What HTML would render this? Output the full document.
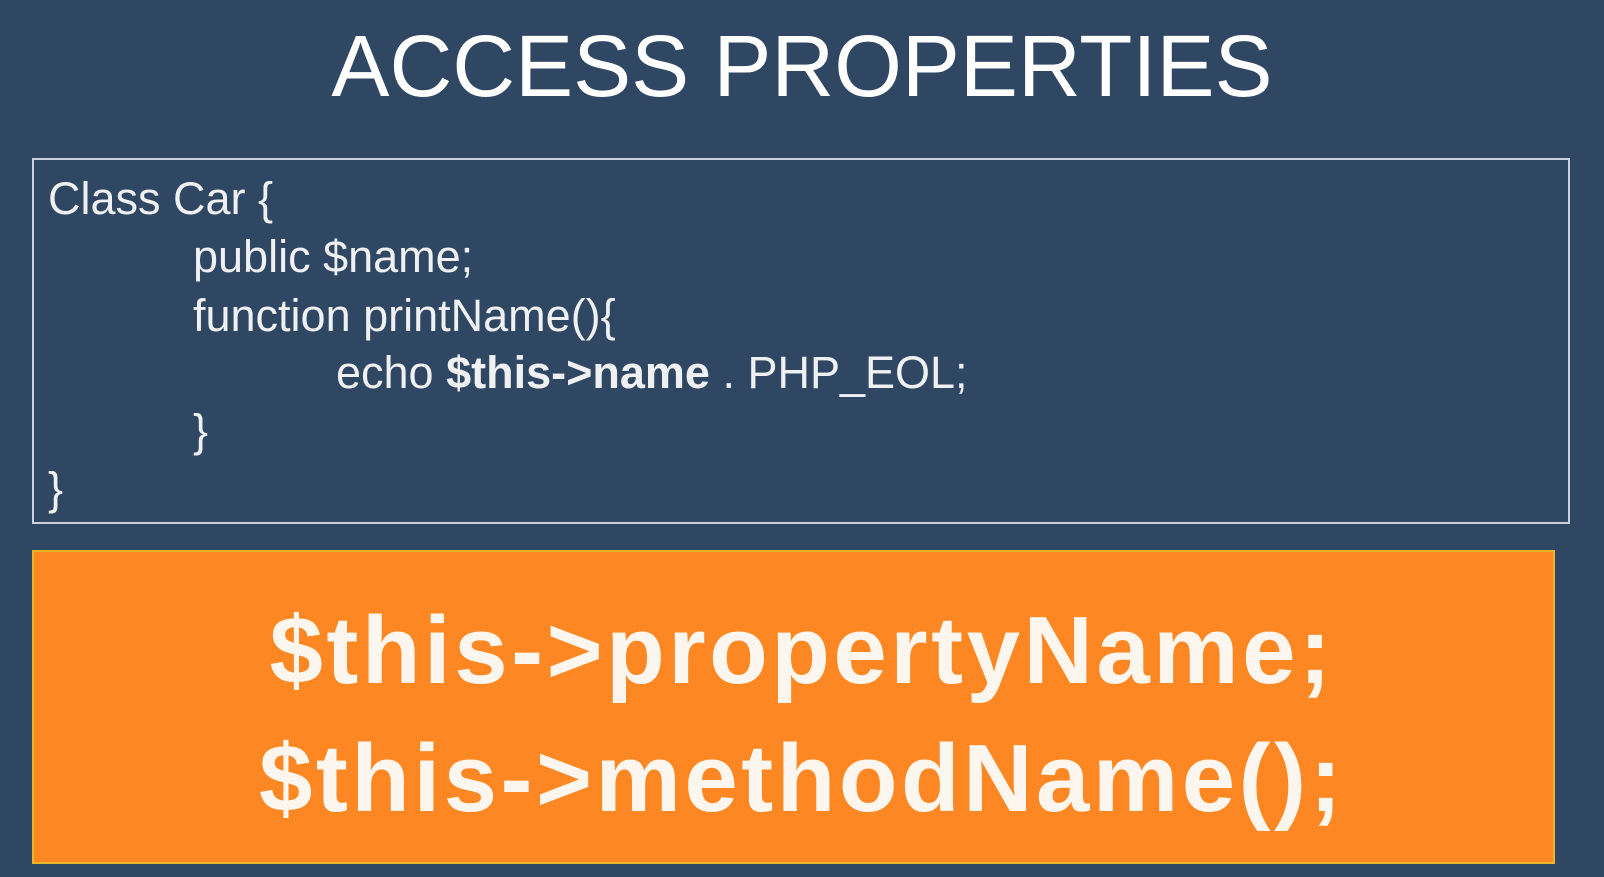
<!DOCTYPE html>
<html><head><meta charset="utf-8"><style>
html,body{margin:0;padding:0}
body{width:1604px;height:877px;background:#2f4762;position:relative;overflow:hidden;font-family:"Liberation Sans",sans-serif;color:#fff}
.t{position:absolute;white-space:nowrap;line-height:1}
#title{left:0;width:1604px;top:23px;text-align:center;font-size:87px}
#title span{display:inline-block;transform:scaleX(1.0);transform-origin:center}
#box{position:absolute;left:32px;top:158px;width:1534px;height:362px;border:2px solid #c9d2dc}
.c{font-size:45px;color:#eef0f2}
#or{position:absolute;left:32px;top:550px;width:1523px;height:314px;background:#fd8722;border:2px solid #e9b52a;box-sizing:border-box}
.o{font-size:96px;font-weight:bold;left:0;width:1604px;text-align:center;color:#fdf6ee;letter-spacing:3.5px}
</style></head><body>
<div class="t" id="title"><span>ACCESS PROPERTIES</span></div>
<div id="box"></div>
<div class="t c" style="left:48px;top:176px">Class Car {</div>
<div class="t c" style="left:193px;top:234px">public $name;</div>
<div class="t c" style="left:193px;top:293px">function printName(){</div>
<div class="t c" style="left:336px;top:350px">echo <b>$this-&gt;name</b> . PHP_EOL;</div>
<div class="t c" style="left:193px;top:408px">}</div>
<div class="t c" style="left:48px;top:466px">}</div>
<div id="or"></div>
<div class="t o" style="top:603px">$this-&gt;propertyName;</div>
<div class="t o" style="top:731px">$this-&gt;methodName();</div>
</body></html>
